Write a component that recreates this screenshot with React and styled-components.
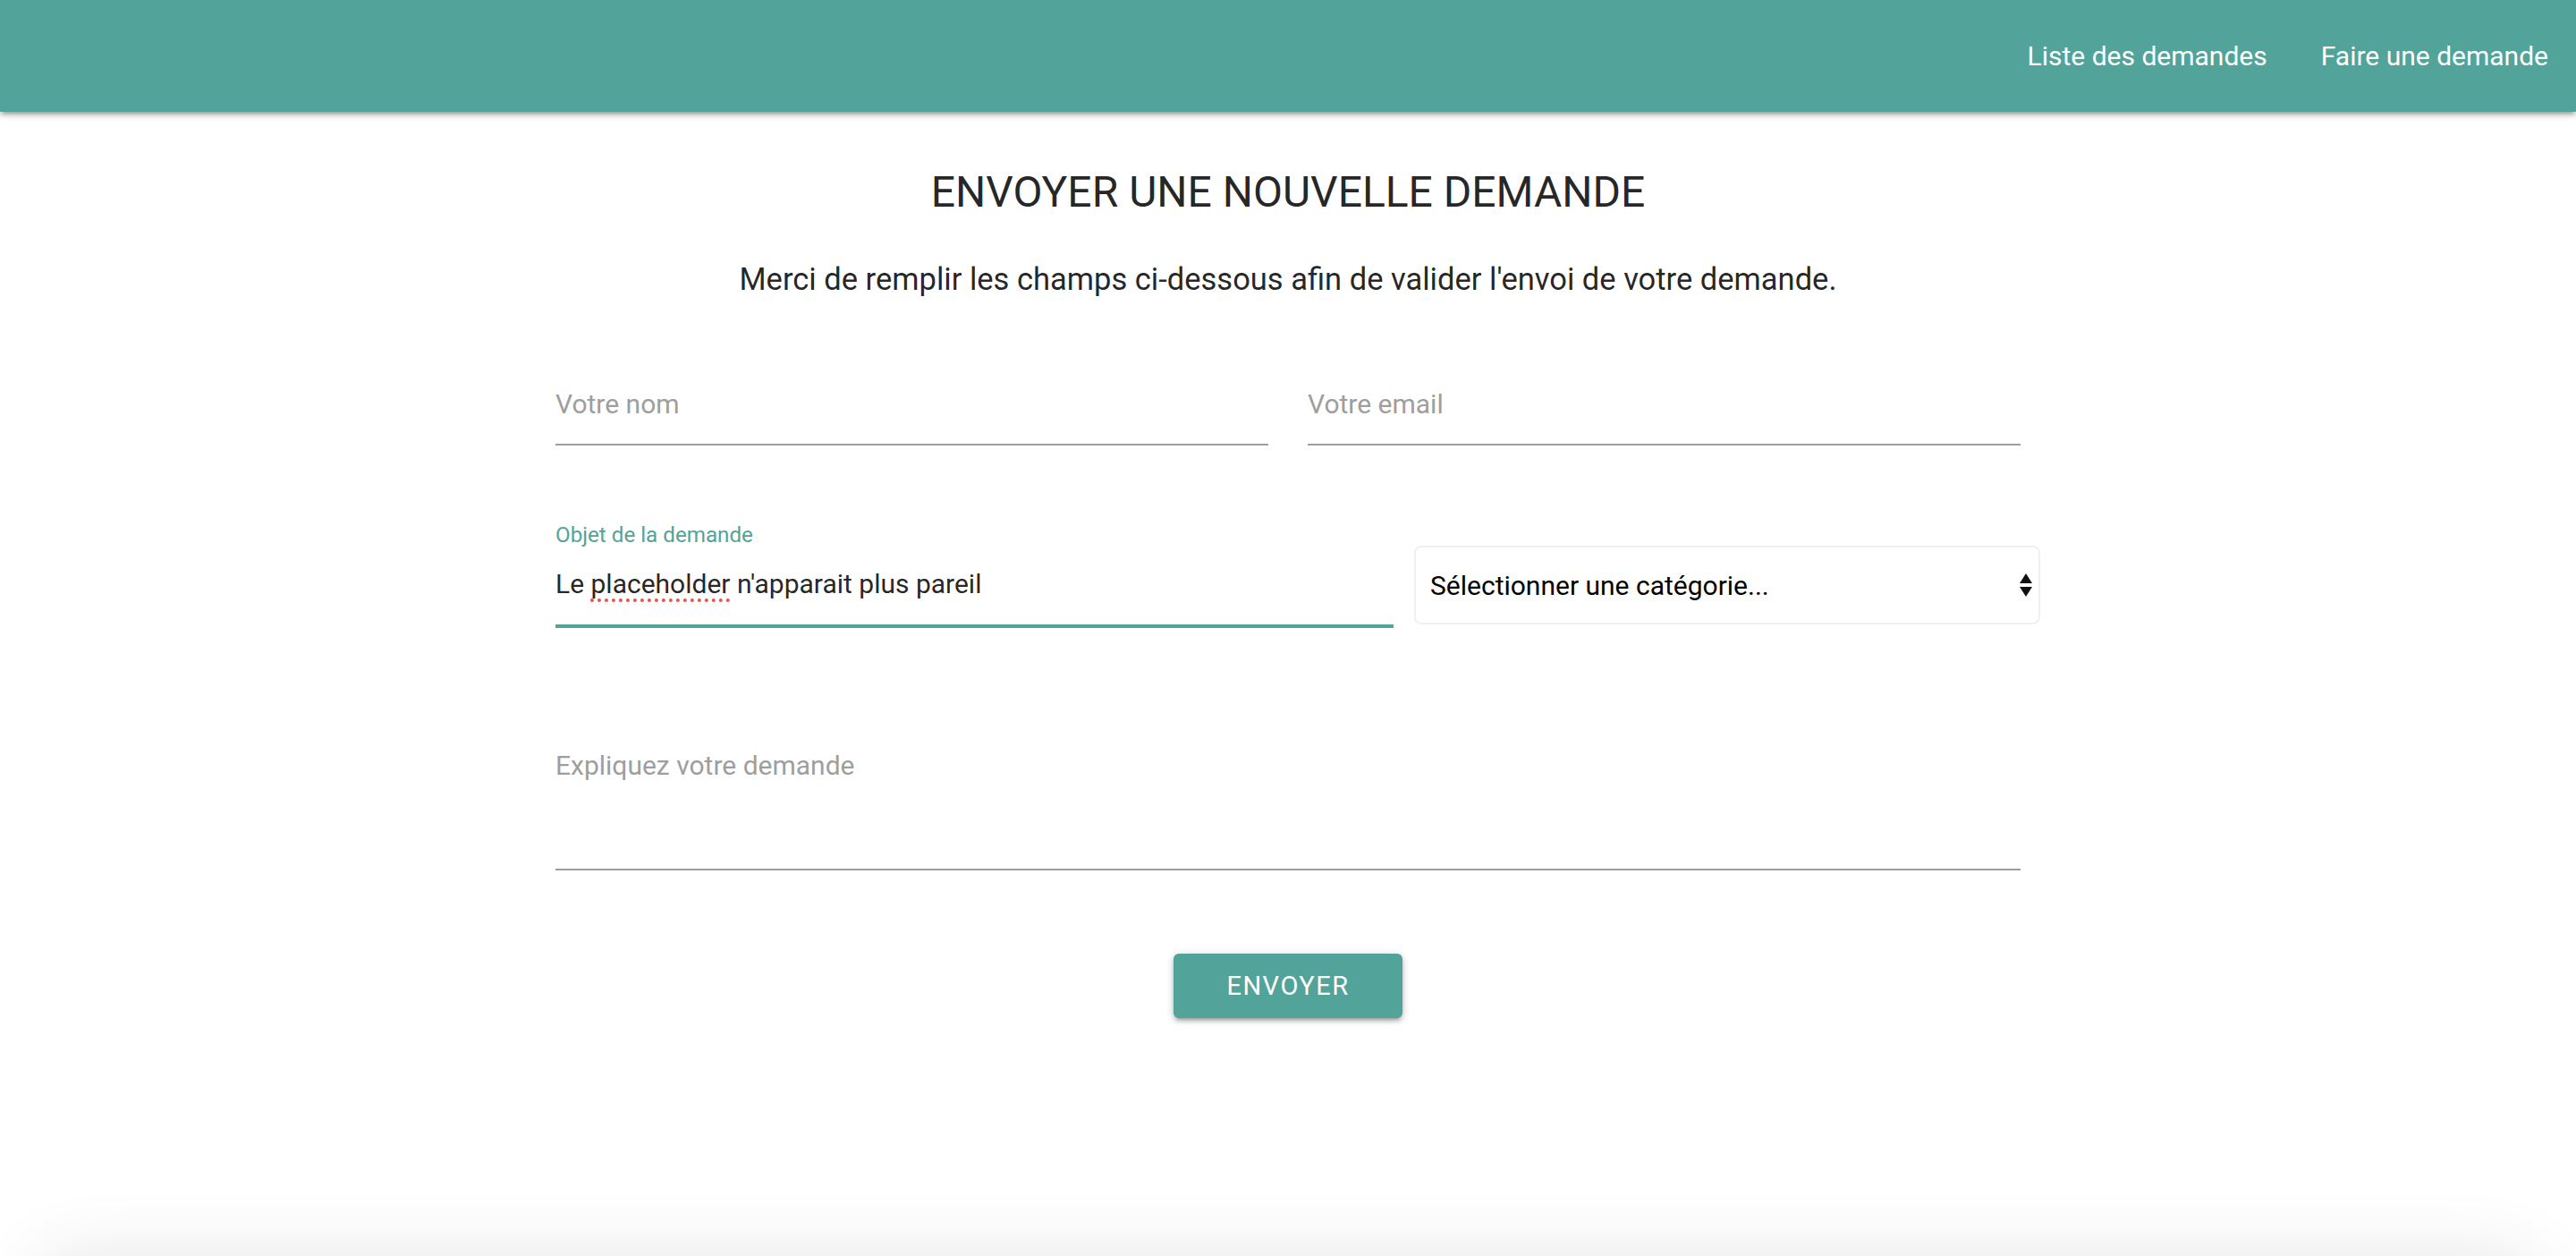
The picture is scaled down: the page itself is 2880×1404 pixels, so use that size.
import React from "react";
import styled, { createGlobalStyle } from "styled-components";

const TEAL = "#52a399";

const GlobalStyle = createGlobalStyle`
  * {
    box-sizing: border-box;
  }
  html, body {
    margin: 0;
    padding: 0;
    background: #ffffff;
    font-family: Roboto, "Liberation Sans", sans-serif;
    color: rgba(0, 0, 0, 0.87);
  }
`;

const Page = styled.div`
  display: flex;
  flex-direction: column;
  overflow: hidden;
`;

const NavBar = styled.nav`
  height: 125px;
  background-color: ${TEAL};
  display: flex;
  align-items: center;
  justify-content: flex-end;
  padding-right: 1px;
  box-shadow: 0 4px 4px 0 rgba(0, 0, 0, 0.14), 0 6px 2px -4px rgba(0, 0, 0, 0.12),
    0 2px 10px 0 rgba(0, 0, 0, 0.2);
  position: relative;
  z-index: 2;

  ul {
    display: flex;
    list-style: none;
    margin: 0;
    padding: 0;
  }
`;

const NavLink = styled.a`
  display: block;
  padding: 0 30px;
  font-size: 30px;
  color: #ffffff;
  text-decoration: none;
  line-height: 125px;
  cursor: pointer;
`;

const Main = styled.main`
  flex: 1;
  min-height: 1279px;
  display: flex;
  flex-direction: column;
  align-items: center;
`;

const Title = styled.h4`
  margin: 59px 0 0;
  font-size: 48px;
  font-weight: 400;
  line-height: 62px;
  text-align: center;
`;

const Intro = styled.p`
  margin: 42px 0 0;
  font-size: 34.5px;
  line-height: 48px;
  text-align: center;
`;

const Form = styled.form`
  width: 1638px;
  display: flex;
  flex-direction: column;
`;

const Row = styled.div`
  display: grid;
  grid-template-columns: ${(p) => p.$cols};
  column-gap: ${(p) => p.$gap || "44px"};
  margin-top: ${(p) => p.$top};
`;

const TextInput = styled.input`
  width: 100%;
  height: 96px;
  border: none;
  border-bottom: 2px solid #9e9e9e;
  outline: none;
  padding: 4px 0 0;
  font-family: inherit;
  font-size: 30px;
  color: rgba(0, 0, 0, 0.87);
  background: transparent;

  &::placeholder {
    color: #9e9e9e;
  }
`;

const Field = styled.div`
  display: flex;
  flex-direction: column;
`;

const FieldLabel = styled.label`
  font-size: 24.2px;
  line-height: 32px;
  color: ${TEAL};
`;

const FilledValue = styled.div`
  height: 88px;
  padding-bottom: 8px;
  display: flex;
  align-items: center;
  font-size: 30px;
  border-bottom: 4px solid ${TEAL};
  color: rgba(0, 0, 0, 0.87);
`;

const Misspelled = styled.span`
  text-decoration: underline dotted #e5534b;
  text-decoration-thickness: 4px;
  text-underline-offset: 7px;
`;

const SelectWrap = styled.div`
  position: relative;
  align-self: end;
  margin-bottom: 4px;
  height: 88px;
`;

const Select = styled.select`
  width: 100%;
  height: 100%;
  appearance: none;
  -webkit-appearance: none;
  border: 2px solid #f0f0f0;
  border-radius: 8px;
  background: #ffffff;
  padding: 0 16px;
  font-family: inherit;
  font-size: 30px;
  color: #000000;
  outline: none;
`;

const Arrows = styled.svg`
  position: absolute;
  right: 8px;
  top: 50%;
  transform: translateY(-50%);
  pointer-events: none;
`;

const TextArea = styled.textarea`
  width: 100%;
  height: 169px;
  resize: none;
  border: none;
  border-bottom: 2px solid #9e9e9e;
  outline: none;
  padding: 28px 0 0;
  font-family: inherit;
  font-size: 30px;
  line-height: 48px;
  background: transparent;

  &::placeholder {
    color: #9e9e9e;
  }
`;

const Actions = styled.div`
  display: flex;
  justify-content: center;
  margin-top: 93px;
`;

const SubmitButton = styled.button`
  height: 72px;
  width: 256px;
  border: none;
  border-radius: 6px;
  background-color: ${TEAL};
  color: #ffffff;
  font-family: inherit;
  font-size: 29px;
  letter-spacing: 1.5px;
  text-transform: uppercase;
  cursor: pointer;
  box-shadow: 0 4px 4px 0 rgba(0, 0, 0, 0.14), 0 6px 2px -4px rgba(0, 0, 0, 0.12),
    0 2px 10px 0 rgba(0, 0, 0, 0.2);
`;

const Footer = styled.footer`
  height: 200px;
  margin: 0 40px;
  border-radius: 40px;
  background: #ffffff;
  box-shadow: 0 0 80px 0 rgba(0, 0, 0, 0.1);
`;

const App = () => {
  return (
    <Page>
      <GlobalStyle />
      <NavBar>
        <ul>
          <li>
            <NavLink>Liste des demandes</NavLink>
          </li>
          <li>
            <NavLink>Faire une demande</NavLink>
          </li>
        </ul>
      </NavBar>
      <Main>
        <Title>ENVOYER UNE NOUVELLE DEMANDE</Title>
        <Intro>
          Merci de remplir les champs ci-dessous afin de valider l'envoi de votre demande.
        </Intro>
        <Form onSubmit={(e) => e.preventDefault()}>
          <Row $cols="1fr 1fr" $top="66px">
            <TextInput type="text" placeholder="Votre nom" />
            <TextInput type="email" placeholder="Votre email" />
          </Row>
          <Row $cols="937px 700px" $gap="23px" $top="84px">
            <Field>
              <FieldLabel>Objet de la demande</FieldLabel>
              <FilledValue>
                <span>
                  Le <Misspelled>placeholder</Misspelled> n'apparait plus pareil
                </span>
              </FilledValue>
            </Field>
            <SelectWrap>
              <Select defaultValue="">
                <option value="">Sélectionner une catégorie...</option>
              </Select>
              <Arrows width="16" height="28" viewBox="0 0 16 28">
                <path d="M8 1 L15 12 L1 12 Z" fill="#111" />
                <path d="M1 16 L15 16 L8 27 Z" fill="#111" />
              </Arrows>
            </SelectWrap>
          </Row>
          <Row $cols="1fr" $top="102px">
            <TextArea placeholder="Expliquez votre demande" />
          </Row>
          <Actions>
            <SubmitButton type="submit">Envoyer</SubmitButton>
          </Actions>
        </Form>
      </Main>
      <Footer />
    </Page>
  );
};

export default App;
